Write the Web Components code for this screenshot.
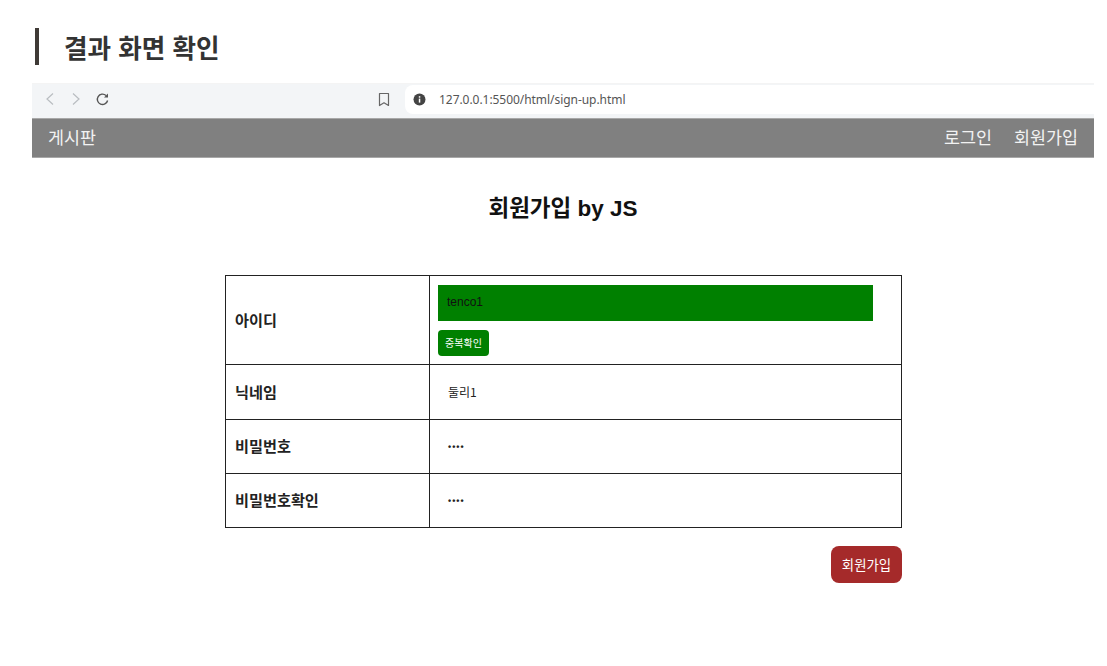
<!DOCTYPE html>
<html lang="ko">
<head>
<meta charset="utf-8">
<title>결과 화면 확인</title>
<style>
  html, body { margin: 0; background: #fff; }
  body { font-family: "Liberation Sans", "Noto Sans CJK KR", sans-serif; }
</style>
</head>
<body>
<section-heading>결과 화면 확인</section-heading>
<browser-frame url="127.0.0.1:5500/html/sign-up.html">
  <site-nav>
    <a slot="brand">게시판</a>
    <a>로그인</a>
    <a>회원가입</a>
  </site-nav>
  <signup-page title-text="회원가입 by JS"></signup-page>
</browser-frame>

<script>
customElements.define(
  "section-heading",
  class extends HTMLElement {
    constructor() {
      super();
      this.attachShadow({ mode: "open" }).innerHTML = /*html*/ `
        <style>
          :host {
            display: block;
            margin: 28px 0 18px 35px;
            height: 37px;
            padding-left: 25px;
            border-left: 4px solid #3f3a36;
            font: 700 25.600px/37px "Noto Sans CJK KR", sans-serif;
            color: #333;
          }
        </style>
        <slot></slot>
      `;
    }
  }
);

customElements.define(
  "browser-frame",
  class extends HTMLElement {
    constructor() {
      super();
      this.attachShadow({ mode: "open" }).innerHTML = /*html*/ `
        <style>
          :host {
            display: block;
            margin-left: 32px;
            width: 1062px;
          }
          .toolbar {
            display: flex;
            align-items: center;
            height: 35px;
            padding-bottom: 4px;
            background: #f3f5f7;
            border-top: 1px solid #f4f4f4;
            box-sizing: border-box;
          }
          .nav {
            display: flex;
            align-items: center;
            padding-left: 11px;
            width: 335px;
          }
          .nav svg { margin-right: 12px; }
          svg { display: block; fill: none; }
          .mark { width: 27px; }
          .address {
            flex: 1;
            display: flex;
            align-items: center;
            gap: 13px;
            align-self: stretch;
            margin-top: 1px;
            padding-left: 8px;
            background: #fff;
            border-radius: 8px 0 0 8px;
            font: 12px "Noto Sans", sans-serif;
            letter-spacing: -0.05px;
            color: #555;
          }
        </style>
        <div class="toolbar">
          <div class="nav">
            <svg width="14" height="14" viewBox="0 0 14 14" stroke="#b9bdc1" stroke-width="1.2"><path d="M10 1.5 4 7l6 5.5"/></svg>
            <svg width="14" height="14" viewBox="0 0 14 14" stroke="#b9bdc1" stroke-width="1.2"><path d="M4 1.5 10 7l-6 5.5"/></svg>
            <svg width="15" height="15" viewBox="0 0 15 15" stroke="#555" stroke-width="1.4"><path d="M12.600 8.500A5.200 5.200 0 1 1 11 3.400"/><path d="M13 1.400v4H9z" fill="#555" stroke="none"/></svg>
          </div>
          <div class="mark">
            <svg width="12" height="15" viewBox="0 0 12 15" stroke="#666" stroke-width="1.2"><path d="M1.500 1.500h9v12L6 10.800l-4.500 2.700z" stroke-linejoin="round"/></svg>
          </div>
          <div class="address">
            <svg width="13" height="13" viewBox="0 0 13 13"><circle cx="6.500" cy="6.500" r="6" fill="#444"/><rect x="5.800" y="5.600" width="1.500" height="4" fill="#fff"/><rect x="5.800" y="3.200" width="1.500" height="1.500" fill="#fff"/></svg>
            <span>${this.getAttribute("url")}</span>
          </div>
        </div>
        <slot></slot>
      `;
    }
  }
);

customElements.define(
  "site-nav",
  class extends HTMLElement {
    constructor() {
      super();
      this.attachShadow({ mode: "open" }).innerHTML = /*html*/ `
        <style>
          :host {
            display: flex;
            justify-content: space-between;
            align-items: center;
            box-sizing: border-box;
            height: 40px;
            padding: 0 16px 3px 16px;
            background: #808080;
            border-top: 1px solid #a8a8a8;
            border-bottom: 1px solid #a8a8a8;
            font: 17.400px "Noto Sans CJK KR", sans-serif;
            color: #f2f2f2;
          }
          .links { display: flex; gap: 22px; }
        </style>
        <slot name="brand"></slot>
        <div class="links"><slot></slot></div>
      `;
    }
  }
);

customElements.define(
  "form-row",
  class extends HTMLElement {
    constructor() {
      super();
      this.attachShadow({ mode: "open" }).innerHTML = /*html*/ `
        <style>
          :host {
            display: grid;
            grid-template-columns: 204px 1fr;
            border-top: 1px solid #222;
          }
          :host(:first-child) { border-top: 0; }
          .label {
            display: flex;
            align-items: center;
            padding: 0 0 3px 9px;
            border-right: 1px solid #222;
            font: 700 15.200px "Noto Sans CJK KR", sans-serif;
            color: #222;
          }
          .value {
            display: flex;
            flex-direction: column;
            justify-content: center;
            align-items: flex-start;
            min-height: var(--row-height, 53px);
            padding-left: 8px;
            font: 12px "Noto Sans CJK KR", sans-serif;
            color: #222;
          }
        </style>
        <div class="label">${this.getAttribute("label")}</div>
        <div class="value"><slot></slot></div>
      `;
    }
  }
);

customElements.define(
  "signup-page",
  class extends HTMLElement {
    constructor() {
      super();
      this.attachShadow({ mode: "open" }).innerHTML = /*html*/ `
        <style>
          :host { display: block; }
          h1 {
            margin: 0;
            padding-top: 37px;
            height: 80px;
            box-sizing: content-box;
            text-align: center;
            font: 700 22.500px/28px "Liberation Sans", "Noto Sans CJK KR", sans-serif;
            color: #111;
          }
          .wrap { margin-left: 193px; width: 677px; }
          .table { border: 1px solid #222; }
          .id-box {
            box-sizing: border-box;
            width: 435px;
            height: 36px;
            padding-left: 9px;
            background: green;
            font-family: "Liberation Sans", sans-serif;
            line-height: 34px;
            color: #111;
          }
          .check {
            margin-top: 9px;
            width: 51px;
            height: 26px;
            border-radius: 4px;
            background: green;
            color: #fff;
            font-size: 10px;
            line-height: 26px;
            text-align: center;
          }
          .field { padding: 0 0 2px 10px; }
          .dots {
            padding-left: 10px;
            font: 700 9px "Liberation Sans", sans-serif;
            letter-spacing: 1px;
          }
          .actions { display: flex; justify-content: flex-end; margin-top: 18px; }
          .submit {
            width: 71px;
            height: 37px;
            border-radius: 8px;
            background: brown;
            color: #fff;
            font: 13.400px/36px "Noto Sans CJK KR", sans-serif;
            text-align: center;
          }
        </style>
        <h1>${this.getAttribute("title-text")}</h1>
        <div class="wrap">
          <div class="table">
            <form-row label="아이디" style="--row-height: 88px">
              <div class="id-box">tenco1</div>
              <div class="check">중복확인</div>
            </form-row>
            <form-row label="닉네임" style="--row-height: 54px"><div class="field">둘리1</div></form-row>
            <form-row label="비밀번호"><div class="dots">••••</div></form-row>
            <form-row label="비밀번호확인"><div class="dots">••••</div></form-row>
          </div>
          <div class="actions"><div class="submit">회원가입</div></div>
        </div>
      `;
    }
  }
);
</script>
</body>
</html>
